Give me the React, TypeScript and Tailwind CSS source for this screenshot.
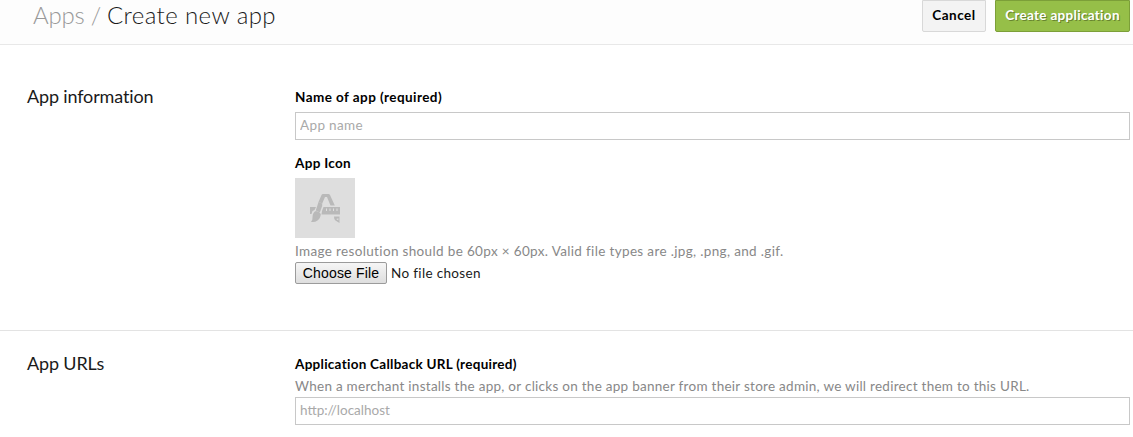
import type { ReactNode } from "react";

function PlaceholderIcon() {
  return (
    <svg viewBox="0 0 30 30" className="h-[30px] w-[30px]" fill="#b9b9b9" aria-hidden="true">
      <path d="M11.5 2 Q12 1 13 1 H18.5 Q19.5 1 20 2 L24.8 12.4 H20.5 L17 4 H15 L12.2 10.5 L8.5 9 Z" />
      <path d="M0 14 H6 L4.5 17 L2.5 18 L1.5 21 H0 Z" />
      <path d="M13.5 14 H30 V21.5 H11.5 L12 18 Z" />
      <path d="M8.5 9 L12.2 10.5 V13 L9.8 19.5 L5.8 17.5 Z" />
      <path d="M6 18 Q9.5 18.5 10.8 21 Q10.5 25.5 7.5 27.5 Q4.5 29.6 1 28.8 Q2.8 27.5 2.5 24.5 Q2.5 19 6 18 Z" />
      <path d="M24 23.5 H29.5 V30 L25.5 27.5 Q23.8 26 24 23.5 Z" />
      <path d="M16.5 15.5 V18 M20 15.5 V18 M23.5 15.5 V18 M27 15.5 V18" stroke="#dedede" strokeWidth="1" />
      <path d="M26.2 26 L28.4 25.2 V27.6 Z" fill="#dedede" />
    </svg>
  );
}

function Section({ title, className, children }: { title: string; className: string; children: ReactNode }) {
  return (
    <section className={`flex pr-[3px] pl-[27px] ${className}`}>
      <h2 className="-mt-px w-[268px] shrink-0 text-lg leading-5 tracking-[-0.15px]">{title}</h2>
      <div className="min-w-0 flex-1">{children}</div>
    </section>
  );
}

const inputClass =
  "block h-7 w-full border border-[#c8c8c8] bg-white px-1 pb-[3px] text-[13.5px] text-black outline-none placeholder:text-[#a9a9a9]";

export default function App() {
  return (
    <main className="h-[437px] overflow-hidden bg-white font-['Lato',sans-serif] text-[13.5px] leading-5 text-[#1a1a1a]">
      <header className="flex h-[45px] items-start justify-between border-b border-[#e8e8e8] bg-[#fdfdfd] pr-[3px] pl-[33px]">
        <h1 className="flex gap-[6px] text-2xl leading-[30px] font-light whitespace-nowrap text-[#1a1a1a]">
          <span className="tracking-[-0.2px] text-[#999]">Apps /</span>
          <span className="tracking-[0.4px]">Create new app</span>
        </h1>
        <div className="flex gap-[9px]">
          <button className="h-8 w-16 rounded-b-[2px] border border-[#d8d8d8] bg-[#f3f3f3] pb-[3px] font-bold tracking-[0.5px] text-black">
            Cancel
          </button>
          <button className="h-8 w-[135px] rounded-b-[2px] border border-[#7c9f38] bg-[#96bf48] pb-[3px] font-bold tracking-[0.3px] whitespace-nowrap text-white [text-shadow:1px_1px_0_#68852f]">
            Create application
          </button>
        </div>
      </header>

      <Section className="h-[286px] border-b border-[#e3e3e3] pt-[42px]" title="App information">
        <label htmlFor="name" className="block h-[25px] font-bold tracking-[0.43px] text-black">
          Name of app (required)
        </label>
        <input id="name" className={`${inputClass} tracking-[0.35px]`} placeholder="App name" />
        <div className="mt-[13px] h-[25px] font-bold tracking-[0.3px] text-black">App Icon</div>
        <div className="flex h-[60px] w-[60px] items-center justify-center bg-[#dedede]">
          <PlaceholderIcon />
        </div>
        <p className="mt-[3px] h-[21px] tracking-[0.345px] whitespace-nowrap text-[#888]">
          Image resolution should be 60px × 60px. Valid file types are .jpg, .png, and .gif.
        </p>
        <div className="flex h-[22px] items-center gap-1">
          <button className="h-[22px] w-[92px] rounded-[2px] border border-[#9b9b9b] bg-linear-to-b from-[#f6f6f6] to-[#dedede] font-['Liberation_Sans',sans-serif] text-sm leading-5 tracking-[0.15px] whitespace-nowrap text-black">
            Choose File
          </button>
          <span className="tracking-[0.34px]">No file chosen</span>
        </div>
      </Section>

      <Section className="pt-[23px]" title="App URLs">
        <label htmlFor="callback" className="block h-[22px] font-bold tracking-[0.27px] text-black">
          Application Callback URL (required)
        </label>
        <p className="h-[21px] tracking-[0.27px] whitespace-nowrap text-[#888]">
          When a merchant installs the app, or clicks on the app banner from their store admin, we will redirect them to this URL.
        </p>
        <input id="callback" className={`${inputClass} tracking-[0px]`} placeholder="http://localhost" />
      </Section>
    </main>
  );
}
